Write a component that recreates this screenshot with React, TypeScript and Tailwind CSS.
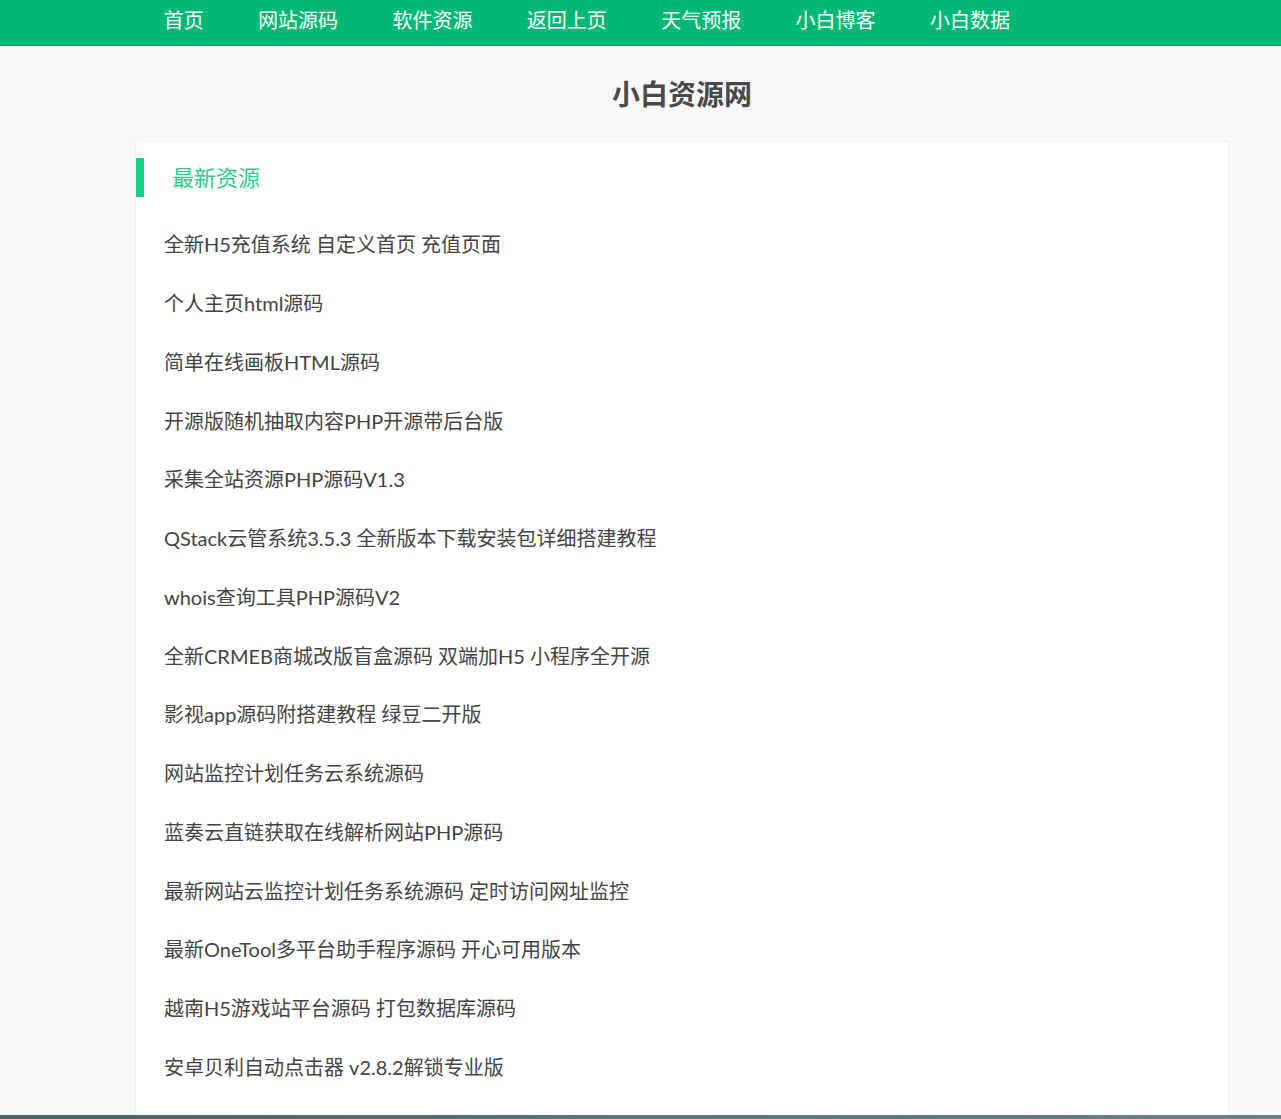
const navItems = ["首页", "网站源码", "软件资源", "返回上页", "天气预报", "小白博客", "小白数据"];

const resources = [
  "全新H5充值系统 自定义首页 充值页面",
  "个人主页html源码",
  "简单在线画板HTML源码",
  "开源版随机抽取内容PHP开源带后台版",
  "采集全站资源PHP源码V1.3",
  "QStack云管系统3.5.3 全新版本下载安装包详细搭建教程",
  "whois查询工具PHP源码V2",
  "全新CRMEB商城改版盲盒源码 双端加H5 小程序全开源",
  "影视app源码附搭建教程 绿豆二开版",
  "网站监控计划任务云系统源码",
  "蓝奏云直链获取在线解析网站PHP源码",
  "最新网站云监控计划任务系统源码 定时访问网址监控",
  "最新OneTool多平台助手程序源码 开心可用版本",
  "越南H5游戏站平台源码 打包数据库源码",
  "安卓贝利自动点击器 v2.8.2解锁专业版",
];

export default function App() {
  return (
    <div
      className="min-h-screen bg-[#f8f8f8] text-[#444]"
      style={{ fontFamily: 'Lato, "Noto Sans CJK SC", sans-serif' }}
    >
      <nav className="h-[46px] bg-[#03b874] pl-[136.5px]">
        <ul className="flex h-full items-center pb-[6px]">
          {navItems.map((item) => (
            <li key={item} className="px-[27.2px] text-[20px] leading-none text-white">
              {item}
            </li>
          ))}
        </ul>
      </nav>

      <div className="pl-[135px] pr-[52px]">
        <h1 className="flex h-[95px] items-center justify-center text-[28px] font-bold text-[#4a4a4a]">
          小白资源网
        </h1>
        <section className="h-[1000px] overflow-hidden border border-[#eeeeee] bg-white pt-[16px]">
          <div className="flex h-[39px] items-center border-l-[8px] border-[#17cf87] pl-[28px]">
            <h2 className="text-[22px] text-[#2ecc8a]">最新资源</h2>
          </div>
          <ul className="mt-[18px] pl-[28px]">
            {resources.map((r) => (
              <li key={r} className="flex h-[58.75px] items-center text-[20px] text-[#444]">
                {r}
              </li>
            ))}
          </ul>
        </section>
      </div>

      <div className="fixed bottom-0 left-0 right-0 h-[4px] bg-gradient-to-r from-[#4d6365] to-[#6c7f8b]" />
    </div>
  );
}
